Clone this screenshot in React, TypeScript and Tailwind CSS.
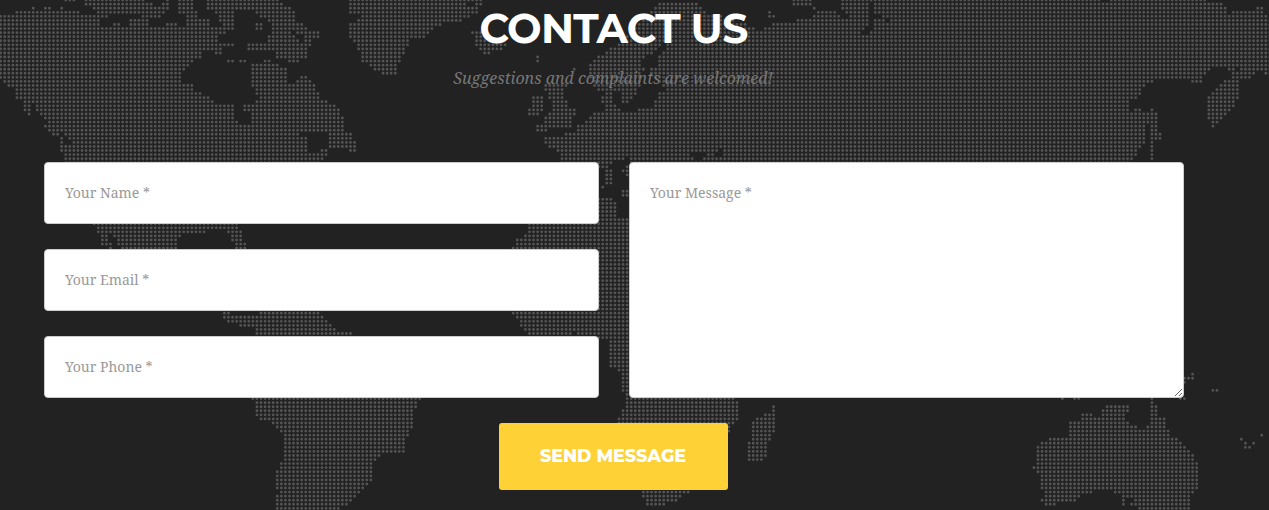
import React from "react";

type Point = [number, number];
type Shape = Point[];

const WIDTH = 1269;
const HEIGHT = 510;
const STEP_X = 4.068;
const STEP_Y = 4.066;
const START_X = 0.65;
const START_Y = 0.1;

const LAND: Shape[] = [
  // North America
  [[-4, 14], [16, 14], [18, 10], [31, 10], [32, 6], [34, 6], [36, 10], [42, 10], [43, 6], [52, 6], [54, 10], [60, 10], [60, 6], [64, 6], [66, 10], [79, 10], [81, 14], [86, 14], [96, 14], [92, 10], [88, 6], [84, 6], [84, 2], [88, -4], [275, -4], [283, 3], [295, 10], [295, 22], [303, 22], [308, 31], [322, 31], [322, 37], [312, 38], [310, 47], [307, 50], [307, 58], [298, 62], [288, 62], [288, 58], [276, 57], [276, 51], [248, 50], [248, 58], [254, 59], [260, 62], [270, 59], [276, 63], [285, 67], [288, 82], [299, 81], [303, 75], [308, 75], [316, 87], [322, 99], [334, 105], [344, 116], [344, 131], [350, 133], [354, 139], [358, 142], [357, 153], [349, 153], [348, 148], [328, 148], [327, 156], [320, 162], [320, 168], [64, 168], [63, 154], [60, 150], [60, 136], [48, 134], [44, 128], [46, 120], [38, 112], [30, 98], [20, 98], [14, 98], [14, 90], [3, 82], [-4, 78]],
  [[24, 99], [29, 101], [31, 112], [35, 116], [31, 119], [24, 112]],
  [[64, -4], [75, -4], [75, 2], [64, 2]],
  // Mexico and Florida
  [[90, 220], [240, 220], [241, 235], [246, 242], [248, 252], [238, 252], [232, 242], [232, 235], [226, 230], [208, 230], [206, 235], [183, 235], [176, 240], [178, 252], [112, 252], [102, 245], [98, 233]],
  // Central and South America
  [[218, 309], [230, 309], [233, 317], [242, 317], [244, 314], [251, 314], [252, 317], [257, 317], [260, 309], [316, 309], [323, 318], [337, 332], [353, 332], [353, 340], [256, 340], [256, 327], [239, 327], [236, 323], [226, 322]],
  [[250, 390], [424, 390], [414, 410], [413, 425], [406, 440], [405, 452], [385, 454], [374, 462], [373, 477], [367, 487], [352, 501], [347, 507], [340, 507], [335, 515], [275, 515], [275, 498], [280, 492], [275, 489], [275, 478], [280, 464], [283, 457], [283, 435], [270, 422], [258, 420], [255, 408]],
  // Greenland
  [[349, -4], [484, -4], [479, 13], [467, 18], [458, 23], [438, 25], [425, 39], [410, 38], [408, 48], [398, 64], [396, 75], [385, 75], [373, 70], [362, 61], [357, 45], [348, 37], [349, 25], [361, 17], [355, 14], [348, 14]],
  // Iceland and North Atlantic islands
  [[471, 34], [475, 29], [482, 29], [488, 37], [507, 43], [506, 46], [500, 51], [491, 51], [489, 55], [484, 55], [477, 48], [474, 39]],
  [[535, 55], [540, 55], [540, 63], [535, 63]],
  [[572, 67], [576, 67], [576, 71], [572, 71]],
  [[545, 82], [568, 82], [563, 95], [569, 106], [576, 111], [573, 119], [572, 129], [549, 128], [546, 132], [536, 132], [536, 125], [546, 123], [544, 116], [553, 112], [553, 102], [548, 97], [544, 90]],
  [[532, 95], [545, 95], [544, 108], [540, 116], [527, 116], [527, 107], [532, 106]],
  // Europe and Asia
  [[562, 170], [562, 157], [556, 149], [548, 147], [544, 143], [544, 137], [564, 137], [565, 132], [576, 132], [577, 126], [588, 118], [593, 112], [606, 112], [606, 106], [601, 102], [601, 95], [607, 91], [597, 90], [590, 77], [588, 68], [593, 59], [604, 53], [615, 45], [622, 39], [632, 30], [642, 18], [656, 7], [661, 3], [680, 1], [699, 2], [701, 9], [712, 14], [735, 20], [748, 24], [757, 30], [770, 27], [773, 23], [792, 21], [798, 18], [814, 16], [815, 10], [808, 5], [794, 5], [790, -4], [1192, -4], [1208, 1], [1225, 5], [1228, 14], [1240, 10], [1252, 10], [1256, 6], [1264, 6], [1262, 14], [1273, 18], [1273, 74], [1265, 74], [1262, 70], [1255, 74], [1249, 79], [1240, 81], [1238, 98], [1234, 108], [1225, 116], [1218, 122], [1215, 128], [1211, 128], [1208, 118], [1208, 99], [1213, 90], [1227, 80], [1234, 74], [1228, 70], [1222, 68], [1212, 68], [1205, 74], [1203, 83], [1191, 83], [1187, 78], [1157, 79], [1143, 87], [1137, 99], [1127, 103], [1131, 111], [1138, 107], [1141, 111], [1147, 114], [1151, 107], [1158, 112], [1158, 131], [1163, 133], [1162, 139], [1154, 140], [1154, 161], [1150, 161], [1150, 125], [1146, 124], [1145, 143], [1132, 160], [1128, 170]],
  [[604, 170], [612, 170], [612, 176], [613, 183], [604, 188]],
  [[620, 165], [640, 165], [640, 181], [625, 178]],
  [[621, 188], [635, 188], [635, 198], [621, 198]],
  // Africa
  [[528, 222], [545, 200], [600, 197], [612, 197], [617, 204], [617, 216], [640, 218], [740, 260], [740, 340], [735, 396], [739, 405], [739, 418], [730, 429], [715, 470], [690, 491], [678, 501], [655, 507], [646, 507], [641, 490], [630, 440], [618, 425], [618, 417], [625, 408], [625, 393], [621, 391], [621, 376], [615, 369], [608, 366], [608, 340], [590, 337], [578, 337], [574, 331], [566, 337], [528, 337], [521, 325], [512, 312], [512, 249], [517, 239], [526, 234]],
  // Madagascar
  [[772, 404], [776, 404], [776, 428], [770, 441], [767, 454], [762, 462], [746, 462], [746, 442], [751, 439], [751, 422], [759, 418], [764, 412], [772, 412]],
  // Australia
  [[1036, 445], [1043, 441], [1056, 437], [1067, 436], [1068, 421], [1077, 421], [1084, 413], [1093, 412], [1095, 416], [1101, 415], [1101, 409], [1106, 404], [1130, 404], [1129, 412], [1125, 414], [1128, 424], [1138, 425], [1140, 429], [1145, 429], [1146, 425], [1150, 423], [1150, 397], [1154, 397], [1155, 404], [1159, 404], [1159, 416], [1167, 416], [1167, 428], [1171, 437], [1178, 437], [1184, 446], [1194, 456], [1200, 466], [1199, 490], [1192, 495], [1190, 503], [1187, 515], [1138, 515], [1137, 507], [1121, 507], [1121, 495], [1113, 493], [1112, 489], [1093, 489], [1090, 495], [1080, 496], [1075, 502], [1057, 504], [1055, 507], [1044, 507], [1040, 500], [1044, 493], [1040, 491], [1040, 474], [1036, 472]],
];

const WATER: Shape[] = [
  // Arctic channels
  [[101, 18], [112, 16], [127, 14], [142, 14], [142, 18], [127, 18], [127, 26], [122, 26], [120, 22], [113, 22], [112, 26], [101, 26]],
  [[150, 18], [163, 16], [166, 9], [177, 9], [178, 14], [186, 17], [186, 26], [180, 26], [178, 22], [166, 22], [165, 26], [150, 26]],
  [[143, -4], [164, -4], [164, 2], [158, 6], [144, 2]],
  [[168, 2], [178, -4], [178, 14], [170, 10]],
  [[194, -4], [206, -4], [206, 10], [217, 14], [221, 22], [220, 26], [209, 26], [211, 20], [198, 16], [194, 8]],
  [[237, 12], [242, 12], [243, 9], [251, 9], [255, 14], [260, 18], [270, 22], [272, 32], [266, 36], [266, 42], [246, 42], [246, 50], [240, 50], [236, 46], [232, 42], [218, 42], [217, 38], [222, 33], [235, 32], [236, 26], [234, 14]],
  [[220, 50], [231, 46], [246, 50], [276, 50], [276, 57], [248, 58], [242, 60], [226, 60]],
  [[292, 32], [297, 33], [306, 39], [303, 45], [299, 40]],
  // Hudson Bay
  [[203, 51], [214, 51], [222, 58], [242, 62], [248, 62], [251, 58], [276, 57], [276, 60], [253, 62], [251, 84], [256, 91], [258, 98], [254, 102], [242, 104], [244, 110], [251, 115], [249, 123], [243, 127], [237, 122], [235, 114], [234, 104], [218, 103], [206, 96], [202, 92], [194, 89], [193, 84], [181, 82], [181, 72], [190, 64], [194, 60], [202, 57]],
  // Gulf of St. Lawrence
  [[300, 132], [329, 132], [329, 148], [320, 149], [318, 153], [307, 153], [307, 136], [300, 136]],
  // Pacific inlets
  [[59, 132], [63, 132], [66, 138], [71, 140], [71, 145], [65, 143]],
  [[108, 229], [112, 236], [118, 244], [124, 252], [114, 252], [109, 240]],
  [[467, 2], [475, 2], [475, 6], [467, 6]],
  // Baltic and Black Seas
  [[642, 58], [653, 54], [660, 46], [666, 43], [667, 47], [659, 55], [656, 66], [650, 69], [652, 76], [658, 84], [669, 88], [657, 94], [654, 106], [641, 108], [634, 112], [622, 112], [614, 102], [612, 94], [619, 93], [622, 102], [630, 102], [637, 95], [642, 82], [640, 74], [646, 70], [641, 64]],
  [[598, 105], [606, 105], [605, 112], [598, 112]],
  [[692, 153], [707, 153], [705, 158], [700, 162], [692, 158]],
  [[714, 154], [718, 149], [723, 150], [722, 159], [714, 157]],
  [[618, 161], [630, 157], [629, 166], [608, 170], [608, 164]],
  // Siberian coast
  [[810, -4], [842, -4], [842, 10], [848, 14], [848, 18], [840, 18], [838, 12], [820, 11], [812, 4]],
  [[785, 6], [806, 6], [814, 16], [798, 18], [785, 20]],
  [[815, 11], [814, 17], [795, 21], [775, 22], [775, 17], [800, 12]],
  [[867, -4], [873, 2], [872, 13], [882, 14], [881, 18], [874, 19], [872, 28], [868, 34], [862, 34], [862, 30], [868, 28], [869, 14]],
  [[885, 18], [889, 18], [889, 22], [885, 22]],
  [[1103, -4], [1109, -4], [1109, 2], [1103, 2]],
  [[1234, 67], [1240, 67], [1240, 71], [1234, 71]],
  [[1128, 499], [1134, 499], [1130, 506], [1125, 506]],
];

// Islands drawn as single dots
const ISLETS: Point[] = [
  [257, 25], [261, 25], [257, 29], [261, 29], [228, 60], [232, 60],
  [1034, 468], [1062, 399], [1074, 399], [1078, 399], [1181, 399], [1185, 399],
  [1184, 378], [1188, 378], [1192, 378], [1192, 374], [1184, 382], [1213, 390], [1217, 390],
  [1262, 435], [1242, 439], [1246, 443], [1254, 443], [1246, 447], [1250, 447],
  [769, 12], [769, 16], [773, 16], [603, 187],
];

function inside(x: number, y: number, shape: Shape) {
  let hit = false;
  for (let i = 0, j = shape.length - 1; i < shape.length; j = i++) {
    const [ax, ay] = shape[i];
    const [bx, by] = shape[j];
    if (ay > y !== by > y && x < ((bx - ax) * (y - ay)) / (by - ay) + ax) hit = !hit;
  }
  return hit;
}

function buildDots() {
  const islets = new Set(
    ISLETS.map(([x, y]) => `${Math.round((x - START_X) / STEP_X)},${Math.round((y - START_Y) / STEP_Y)}`),
  );
  let d = "";
  for (let row = 0; row * STEP_Y < HEIGHT + 2; row++) {
    const y = START_Y + row * STEP_Y;
    for (let col = 0; col * STEP_X < WIDTH + 2; col++) {
      const x = START_X + col * STEP_X;
      const dry = LAND.some((s) => inside(x, y, s)) && !WATER.some((s) => inside(x, y, s));
      if (dry || islets.has(`${col},${row}`)) d += `M${x.toFixed(2)} ${y.toFixed(2)}h0`;
    }
  }
  return d;
}

const DOTS = buildDots();

function DottedMap() {
  return (
    <svg className="absolute inset-0 h-full w-full" viewBox="0 0 1269 510" aria-hidden="true">
      <path d={DOTS} fill="none" stroke="#545454" strokeWidth="2.85" strokeLinecap="round" />
    </svg>
  );
}

const FIELD =
  "block w-full rounded-[4px] border border-[#ccc] bg-white px-5 font-['Roboto_Slab','Noto_Serif','DejaVu_Serif',serif] text-[14px] text-[#555] outline-none placeholder:text-[#999] placeholder:opacity-100";

export default function App() {
  return (
    <section className="relative h-[510px] w-full overflow-hidden bg-[#222]">
      <DottedMap />
      <div className="relative ml-11 w-[1140px]">
        <h2 className="pt-[3px] pr-px text-center font-['Montserrat','Inter',sans-serif] text-[41px] leading-[50px] font-bold tracking-[-0.75px] whitespace-nowrap text-white">
          CONTACT US
        </h2>
        <p className="mt-[13px] pr-[2px] text-center font-['Droid_Serif','Noto_Serif','Liberation_Serif',serif] text-[16px] leading-6 whitespace-nowrap text-[#777] italic">
          Suggestions and complaints are welcomed!
        </p>
        <form className="mt-[72px]" onSubmit={(e) => e.preventDefault()}>
          <div className="grid grid-cols-2 gap-[30px]">
            <div className="flex flex-col gap-[25px]">
              <input className={`${FIELD} h-[62px] pb-0.5`} placeholder="Your Name *" />
              <input className={`${FIELD} h-[62px] pb-0.5`} placeholder="Your Email *" />
              <input className={`${FIELD} h-[62px] pb-0.5`} placeholder="Your Phone *" />
            </div>
            <textarea className={`${FIELD} h-[236px] resize py-5 leading-5`} placeholder="Your Message *" />
          </div>
          <div className="mt-[25px] flex justify-center pr-[2px]">
            <button
              type="submit"
              className="h-[67px] w-[229px] rounded-[3px] bg-[#fed136] font-['Montserrat','Inter',sans-serif] text-[17.5px] font-extrabold tracking-[-0.05px] whitespace-nowrap text-white"
            >
              SEND MESSAGE
            </button>
          </div>
        </form>
      </div>
    </section>
  );
}
